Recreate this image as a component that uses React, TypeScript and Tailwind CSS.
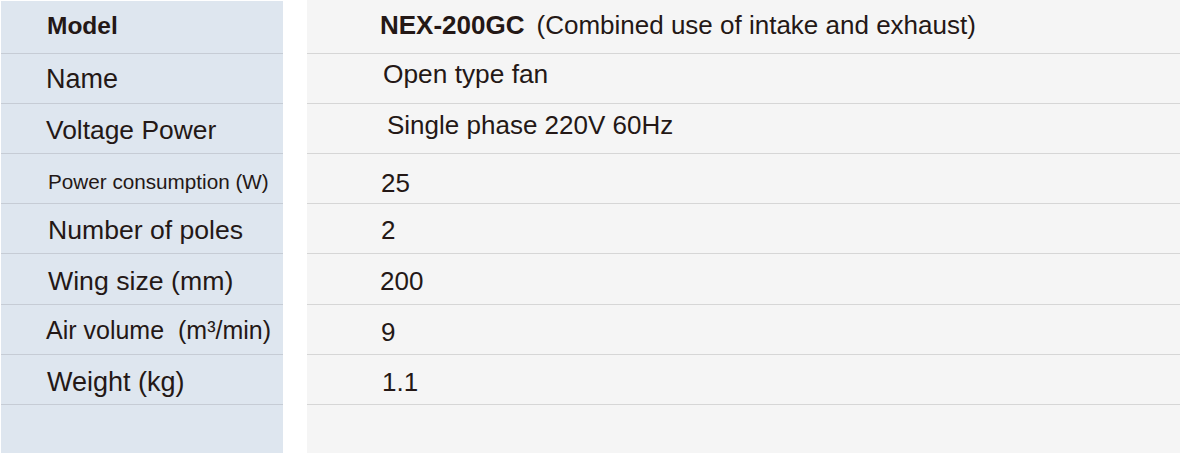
import React from "react";

const font = { fontFamily: '"Liberation Sans", Arial, sans-serif' };

type Row = { label: React.ReactNode; value: React.ReactNode; lh: string; rh: string; lcls: string; rcls: string };

const rows: Row[] = [
  {
    label: <span className="font-bold text-[24.5px]">Model</span>,
    value: (
      <span className="text-[26px]">
        <span className="font-bold text-[26px] mr-[12px]">NEX-200GC</span>(Combined use of intake and exhaust)
      </span>
    ),
    lh: "h-[53px]",
    rh: "h-[54px]",
    lcls: "pl-[46px] pb-[2px]",
    rcls: "pl-[73px] pb-[3px]",
  },
  { label: <span className="text-[27px]">Name</span>, value: <span className="text-[26.3px]">Open type fan</span>, lh: "h-[50px]", rh: "h-[50px]", lcls: "pl-[45px] pt-[2px]", rcls: "pl-[76px] pb-[8px]" },
  { label: <span className="text-[26.4px]">Voltage Power</span>, value: "Single phase 220V 60Hz", lh: "h-[50px]", rh: "h-[50px]", lcls: "pl-[45px] pt-[4px]", rcls: "pl-[80px] pb-[8px]" },
  {
    label: <span className="text-[20.7px]">Power consumption (W)</span>,
    value: "25",
    lh: "h-[50px]",
    rh: "h-[50px]",
    lcls: "pl-[47px] pt-[8px]",
    rcls: "pl-[74px] pt-[8px]",
  },
  { label: <span className="text-[26.6px]">Number of poles</span>, value: "2", lh: "h-[50px]", rh: "h-[50px]", lcls: "pl-[47px] pt-[4px]", rcls: "pl-[74px] pt-[2px]" },
  { label: <span className="text-[26.7px]">Wing size (mm)</span>, value: "200", lh: "h-[51px]", rh: "h-[51px]", lcls: "pl-[47px] pt-[4px]", rcls: "pl-[73px] pt-[4px]" },
  { label: <span className="text-[25px]">Air volume{"\u00a0\u00a0"}(m³/min)</span>, value: "9", lh: "h-[50px]", rh: "h-[50px]", lcls: "pl-[45px] pt-[2px]", rcls: "pl-[74px] pt-[4px]" },
  { label: <span className="text-[27px]">Weight (kg)</span>, value: "1.1", lh: "h-[50px]", rh: "h-[50px]", lcls: "pl-[46px] pt-[6px]", rcls: "pl-[75px] pt-[4px]" },
];

export default function App() {
  return (
    <div className="w-[1180px] h-[455px] bg-white flex text-[#241816]" style={font}>
      <div className="w-[282px] ml-[1px] mt-[1px] h-[452px] bg-[#dee6ef] flex flex-col">
        {rows.map((r, i) => (
          <div
            key={i}
            className={`${r.lh} border-b border-[#c6ccd5] flex items-center text-[26px] leading-none whitespace-nowrap ${r.lcls}`}
          >
            {r.label}
          </div>
        ))}
      </div>
      <div className="ml-[24px] flex-1 h-[453px] bg-[#f5f5f5] flex flex-col">
        {rows.map((r, i) => (
          <div
            key={i}
            className={`${r.rh} border-b border-[#d6d6d6] flex items-center text-[26px] leading-none whitespace-nowrap ${r.rcls}`}
          >
            {r.value}
          </div>
        ))}
      </div>
    </div>
  );
}
